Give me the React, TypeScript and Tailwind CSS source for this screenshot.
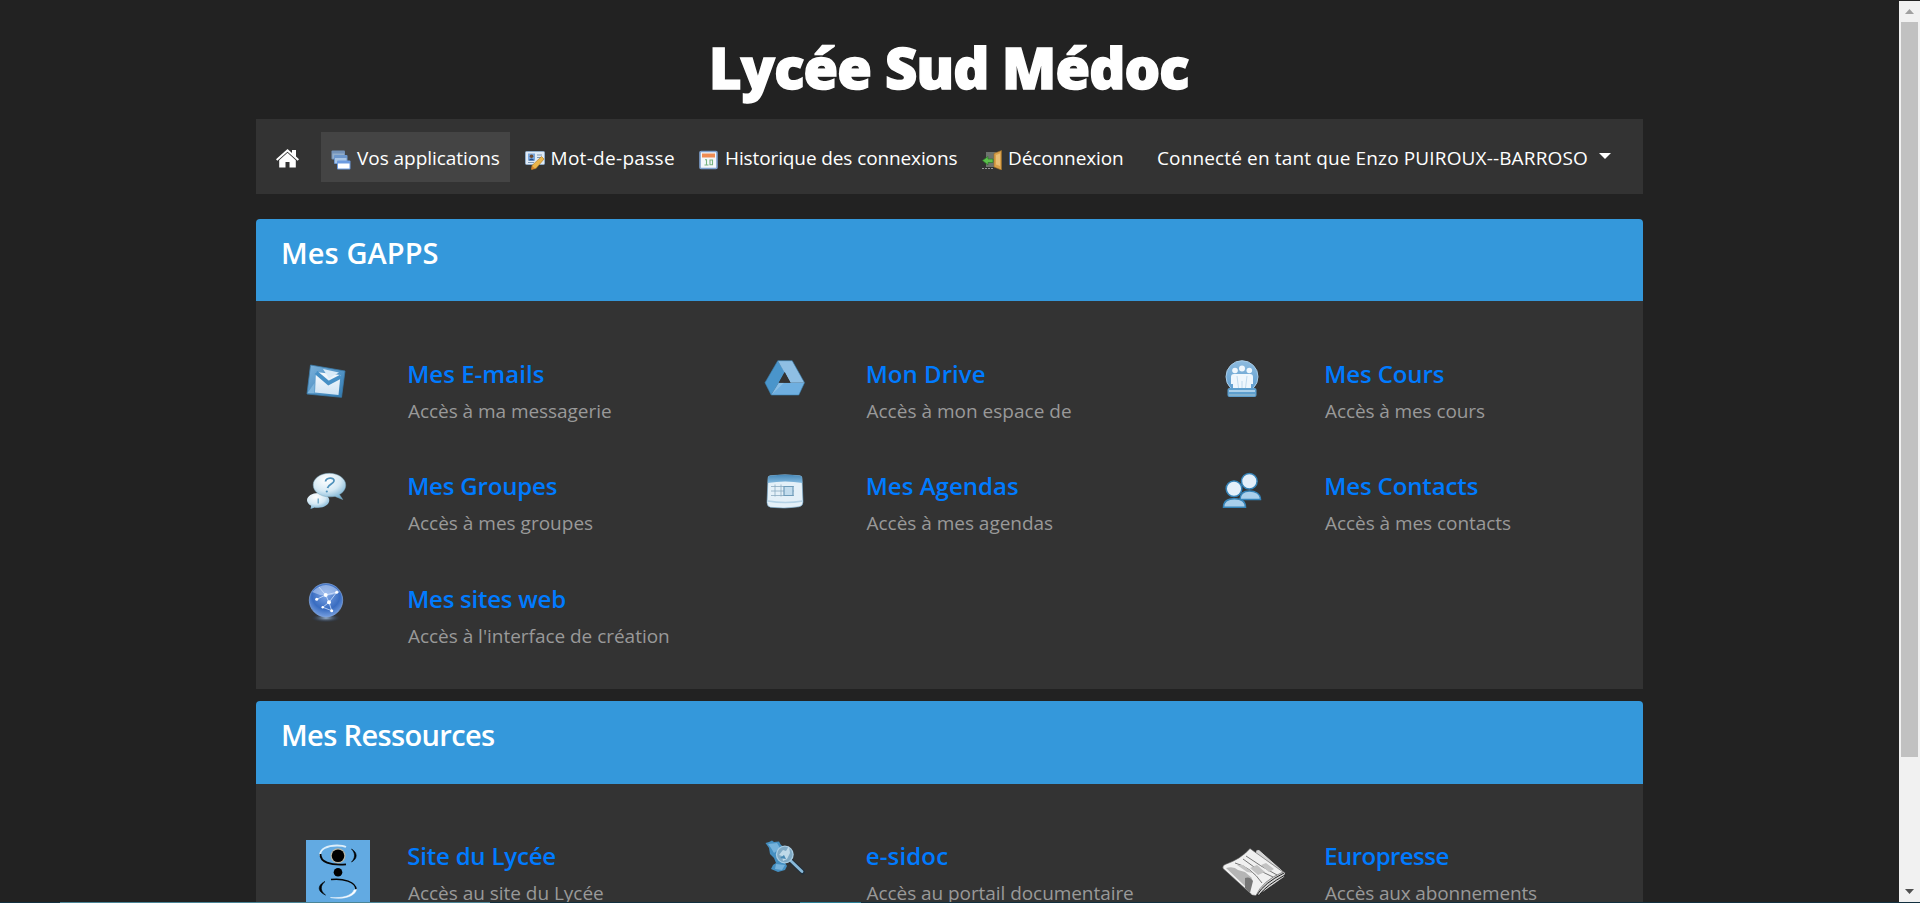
import type { ReactNode } from "react";

const svg = "block h-10 w-10 overflow-visible";

const MailIcon = () => (
  <svg viewBox="0 0 40 40" className={svg}>
    <defs>
      <linearGradient id="mailA" x1="0" y1="0" x2="1" y2="1"><stop offset="0" stopColor="#7db3dd" /><stop offset="1" stopColor="#2f79b0" /></linearGradient>
      <linearGradient id="mailB" x1="0" y1="0" x2="0" y2="1"><stop offset="0" stopColor="#f6fafd" /><stop offset="1" stopColor="#cfe3f3" /></linearGradient>
    </defs>
    <path d="M4.500 7 39 13 35.500 39.300 1 36Z" fill="url(#mailA)" stroke="#3a7aa8" strokeWidth=".8" strokeLinejoin="round" />
    <path d="M10 14 34.500 17 32.500 37 9 34.500Z" fill="url(#mailB)" />
    <path d="M1.500 35 8.500 25 8.500 35Z" fill="#8fc0e4" opacity=".7" />
    <path d="M17 11 33 14.500 23 20.500Z" fill="#d9ebf8" />
    <path d="M10 14.500 22.500 25 35 18.500" fill="none" stroke="#4690c6" strokeWidth="4" />
  </svg>
);

const DriveIcon = () => (
  <svg viewBox="0 0 40 40" className={svg}>
    <path d="M12.800 2.700 19.800 13.700 13.800 24.700 6.200 37 0 24.700Z" fill="#4a95cb" />
    <path d="M12.800 2.700H27.200L39.500 24.700H25.500Z" fill="#8fbfe4" />
    <path d="M13.800 24.700H39.500L33.800 37H6.200Z" fill="#6fafe0" />
    <path d="M13.800 24.700 6.200 37 19 24.700Z" fill="#9bc8ea" opacity=".6" />
    <path d="M12.800 2.700H27.200L39.500 24.700 33.800 37H6.200L0 24.700Z" fill="none" stroke="#3b83b6" strokeWidth=".6" />
    <path d="M19.800 14 25.500 24.700H13.800Z" fill="#333" />
  </svg>
);

const CoursesIcon = () => (
  <svg viewBox="0 0 40 40" className={svg}>
    <defs><linearGradient id="crsA" x1="0" y1="0" x2="0" y2="1"><stop offset="0" stopColor="#8dbbdf" /><stop offset="1" stopColor="#5b9bce" /></linearGradient></defs>
    <circle cx="19" cy="18.700" r="16" fill="url(#crsA)" stroke="#a9cde8" strokeWidth="1" />
    <g fill="#eff7fd">
      <circle cx="12" cy="12.500" r="2.800" /><circle cx="26.300" cy="12.500" r="2.800" /><circle cx="19" cy="10.500" r="3" />
      <path d="M8 19q0-3 3-3h16q3 0 3 3v7h-2v5H10v-5H8z" />
    </g>
    <path d="M14 18 15.500 30M24 18 22.500 30M19 23v8" stroke="#b5d3ea" strokeWidth=".8" />
    <rect x="4.500" y="30" width="29" height="9" rx="2" fill="#5e9fce" />
    <path d="M6 33h26" stroke="#c7e1f3" strokeWidth="1.500" />
    <path d="M6 37h26" stroke="#8fb7cf" strokeWidth="1.500" />
  </svg>
);

const GroupsIcon = () => (
  <svg viewBox="0 0 40 40" className={svg}>
    <defs><radialGradient id="grpA" cx=".4" cy=".25" r=".8"><stop offset="0" stopColor="#fff" /><stop offset=".55" stopColor="#d5e9f4" /><stop offset="1" stopColor="#6facd0" /></radialGradient></defs>
    <path d="M12.300 22c6 0 11 3.200 11 7.300s-5 7.500-11 7.500c-1.600 0-2.500-.2-3.600-.4L4.500 38l.7-3.200C2.700 33.500 1 31.500 1 29.300 1 25.200 6.200 22 12.300 22Z" fill="url(#grpA)" />
    <path d="M23.300 2.300c9 0 16.400 5.200 16.400 11.700 0 4-2.500 7.400-6.300 9.500l3.300 5-7.700-3.100c-12 2.200-21.800-3.600-21.800-11.400C7.200 7.500 14.300 2.300 23.300 2.300Z" fill="url(#grpA)" stroke="#7fa9bd" strokeWidth=".5" />
    <path d="M19.500 10.500c.5-4 9-4.600 8.500-.5-.3 3-5.500 3-6.500 7" fill="none" stroke="#4e91bb" strokeWidth="1.800" /><circle cx="20.800" cy="20.500" r="1.100" fill="#4e91bb" />
    <path d="M12.200 27.500v5" stroke="#5a9dc0" strokeWidth="1.200" />
  </svg>
);

const AgendaIcon = () => (
  <svg viewBox="0 0 40 40" className={svg}>
    <defs><linearGradient id="agdA" x1="0" y1="0" x2="0" y2="1"><stop offset="0" stopColor="#4788b8" /><stop offset="1" stopColor="#83b9de" /></linearGradient></defs>
    <path d="M3 7q0-2 2-2.300 15-1.800 30 0 2 .3 2 2.300l1 24q0 4-4 4.800-14 2.300-28.500.5Q2 35.500 2 31.500Z" fill="#e4f0f8" stroke="#75a9cc" strokeWidth=".6" />
    <path d="M3 7q0-2 2-2.300 15-1.800 30 0 2 .3 2 2.300l.3 5q-17-3-34.500 0Z" fill="url(#agdA)" />
    <path d="M6 15.500h23M6 20h23M6 24.500h23M10 13.500v12M16 13.500v12" stroke="#8cabc0" strokeWidth=".8" />
    <path d="M19 15.500h9v9h-9z" fill="#c2dced" stroke="#6f9cb9" strokeWidth="1.200" />
    <path d="M3 30q17 3 35 0" stroke="#b4d2e6" fill="none" strokeWidth="1.400" />
  </svg>
);

const ContactsIcon = () => (
  <svg viewBox="0 0 40 40" className={svg} stroke="#3583b8" strokeWidth="1.500">
    <path d="M17 28.500c0-6 4-8.500 9.500-8.500s11 2.500 11 8.500Z" fill="#a9cfeb" />
    <circle cx="26.300" cy="10.200" r="7.800" fill="#e3effa" />
    <path d="M.5 36.300c0-6 4.500-8.500 11-8.500s11 2.500 11 8.500Z" fill="#a9cfeb" />
    <circle cx="11" cy="17.800" r="7.800" fill="#e3effa" />
  </svg>
);

const WebIcon = () => (
  <svg viewBox="0 0 40 40" className={svg}>
    <defs>
      <radialGradient id="webA" cx=".5" cy=".35" r=".7"><stop offset="0" stopColor="#7ea6e6" /><stop offset=".6" stopColor="#396cc0" /><stop offset="1" stopColor="#82a9e6" /></radialGradient>
      <radialGradient id="webB"><stop offset="0" stopColor="#9cb5d2" /><stop offset="1" stopColor="#1c3355" stopOpacity="0" /></radialGradient>
    </defs>
    <ellipse cx="20" cy="35" rx="15" ry="4.500" fill="url(#webB)" />
    <circle cx="20" cy="17.200" r="16.700" fill="url(#webA)" stroke="#80a5df" strokeWidth=".7" />
    <path d="M6 9Q20-5 34 9 20 16 6 9" fill="#c2d7f8" opacity=".55" />
    <path d="M10.700 16.300 19.700 12l3.300 7.300L30.700 9.300M13 4l6.700 8 11-2.700M23 19.300l2.700 8.400M23 19.300 16.700 24.300M25.700 27.700 17 24.300" stroke="#cfe2ff" strokeWidth=".8" fill="none" />
    <g fill="#fff"><circle cx="19.700" cy="12" r="2" /><circle cx="30.700" cy="9.300" r="1.500" /><circle cx="10.700" cy="16.300" r="1.500" /><circle cx="23" cy="19.300" r="2" /><circle cx="25.700" cy="27.700" r="1.500" /><circle cx="16.700" cy="24.300" r="1.200" /></g>
  </svg>
);

const SchoolIcon = () => (
  <svg viewBox="0 0 64 64" className="block h-16 w-16">
    <rect width="64" height="64" fill="#62aae2" />
    <path d="M14 15.500C14 9 21 5.500 31 5.500q6 0 9 1.500" fill="none" stroke="#dceefa" strokeWidth="1.800" />
    <path d="M14.500 14C14 22 24 25.500 40 24.300" fill="none" stroke="#050505" strokeWidth="1.800" />
    <circle cx="32" cy="15.700" r="7.500" fill="#b9b7a7" /><circle cx="32" cy="15.700" r="6.300" fill="#000" />
    <path d="M45.500 9c6 3.500 6.500 9.500 0 13 4-4 4-9 0-13Z" fill="#000" stroke="#000" strokeWidth=".6" />
    <circle cx="32" cy="32.300" r="4.300" fill="#000" />
    <path d="M19 41.500c-8 4-7.500 10 .5 13.500-5.500-4-5.500-9.500-.5-13.500Z" fill="#000" stroke="#000" strokeWidth=".6" />
    <path d="M25 39.500c12-1.500 25 2.500 25 10" fill="none" stroke="#050505" strokeWidth="1.500" />
    <path d="M50.500 49.500C49 56.500 37 60 24.500 57.500 37 58.500 46 55.500 48 50Z" fill="#fff" stroke="#e5f2fb" strokeWidth=".6" />
  </svg>
);

const SearchIcon = () => (
  <svg viewBox="0 0 40 40" className={svg}>
    <path d="M.5 3 4 2 7 .5 9 2l5-.5L16 5l5 3-2 13 3 5-2 4-7 2-7-3 2-4 3-2-2-5L5 14 4 8Z" fill="#458fc1" />
    <path d="M3 4 12 3 15 8 9 13 6 8ZM11 24l9 1-3 5-7-1Z" fill="#75b2db" />
    <path d="m26.500 21.500 11 10.500" stroke="#1c2f3f" strokeWidth="5" opacity=".7" strokeLinecap="round" />
    <path d="m25.500 20.500 11.500 11" stroke="#88b9da" strokeWidth="2.800" strokeLinecap="round" />
    <circle cx="19.800" cy="14.500" r="8.300" fill="#7fa9c4" stroke="#a9cde4" strokeWidth="1.300" />
    <path d="M14 15l4-5 3 1 3-5 1 7-3 6-4 2-1-5Z" fill="#bfd9e8" /><path d="M15 18l4-3 2 4Z" fill="#4688b3" />
  </svg>
);

const NewspaperIcon = () => (
  <svg viewBox="0 0 64 64" className="block h-16 w-16 overflow-visible">
    <path d="M33 10 36 9.500 62.500 33 61.500 37 36 55 28 55 26 48Z" fill="#d4d4d4" stroke="#222" strokeWidth=".8" />
    <path d="M27 8.500 60 32Q39 41 33 55.500 29 56 27 53L0 28.500Q-1 26 2 24.500 18 19 27 8.500Z" fill="#f0f0f0" stroke="#555" strokeWidth=".6" />
    <path d="M3 28q8-2 12 2l7 2 7 6-5 10Z" fill="#b5b5b5" /><path d="M22 38q5-2 8 3l-3 12-5-5Z" fill="#777" />
    <path d="M23 16Q37 26 54 35M20 19Q34 31 50 37M12 23Q28 27 39 43" stroke="#555" strokeWidth=".8" fill="none" />
    <path d="m27 28 7-3 8 7-7 3ZM38 25l5-2 8 6-5 3ZM14 25l6 0 10 8-6-1Z" fill="#c3c3c3" />
    <path d="M61 33Q41 43 34 55M62 35Q44 45 37 54" stroke="#222" strokeWidth="1" fill="none" />
  </svg>
);

const HomeIcon = () => (
  <svg viewBox="0 0 23 19" className="block h-[19px] w-[23px] fill-white">
    <path d="M11.500 0 16 4V1h4v6.600l3 2.700-1.300 1.500L11.500 2.800 1.300 11.800 0 10.300Z" />
    <path d="M11.500 3.800 19.800 11.300V18.500H13.500V13H9.500V18.500H3.200V11.300Z" />
  </svg>
);

const small = "mt-1 block h-5 w-5 shrink-0";

const AppsIcon = () => (
  <svg viewBox="0 0 20 20" className={small}>
    <rect x=".5" y=".5" width="13.500" height="9" rx="1" fill="#7493b9" /><rect x="1.500" y="3.500" width="11.500" height="5" fill="#93aeca" />
    <rect x="3" y="5" width="13.500" height="9" rx="1" fill="#6d97cc" /><rect x="4" y="8" width="11.500" height="5" fill="#a9c5e5" />
    <rect x="6" y="10.500" width="13.500" height="9" rx="1" fill="#6c9be0" /><rect x="7" y="13.500" width="11.500" height="5" fill="#fff" />
  </svg>
);

const PasswordIcon = () => (
  <svg viewBox="0 0 20 20" className={small}>
    <rect x=".5" y="1.500" width="19" height="13" rx="1" fill="#dfeaf6" stroke="#8eabc8" />
    <rect x="3" y="3.500" width="7" height="7" fill="#78a6dc" /><circle cx="6.500" cy="6.200" r="1.800" fill="#6d4a30" /><path d="M3.500 10.500q3-4 6 0Z" fill="#234f8b" />
    <path d="M12 5h5M12 7.500h4M3 12.500h6" stroke="#7d98b5" />
    <path d="M16.500 6.500 19 9 11 18.500 6.500 19.500 7 15.500Z" fill="#eab54a" stroke="#a9741d" strokeWidth=".6" /><path d="m6.500 19.500.5-3.500 3 2.500Z" fill="#d7812c" />
  </svg>
);

const CalendarIcon = () => (
  <svg viewBox="0 0 20 20" className={small}>
    <rect x="1" y="1.500" width="17" height="17" rx="1" fill="#f4f7fb" stroke="#7ea1d0" strokeWidth="1.600" />
    <rect x="3" y="3.500" width="13" height="4" fill="#ef8c54" />
    <path d="M6 9.800h1.500v5M5.500 15h4M11 10h2.500v4.800h-2.500z" stroke="#76b380" strokeWidth="1.100" fill="none" />
  </svg>
);

const LogoutIcon = () => (
  <svg viewBox="0 0 20 20" className={small}>
    <path d="M4 2h13v15H4z" fill="#6d726d" /><path d="M0 18.500h12" stroke="#999" strokeDasharray="2 1" />
    <path d="M12 3.500 19.500.500V20L12 17Z" fill="#d9a04a" stroke="#9b6b23" strokeWidth=".6" /><path d="m14 5 4-1.500V16l-4-1.500Z" fill="#e9be74" />
    <path d="M.5 10.500 6 6.500v2.500h5v3.500H6V15Z" fill="#5cc04c" stroke="#2c7928" strokeWidth=".7" />
  </svg>
);

function NavItem({ className, icon, children }: { className: string; icon?: ReactNode; children: ReactNode }) {
  return (
    <a className={`flex h-[50px] shrink-0 items-center gap-1.5 pt-0.5 text-[19px] leading-[30px] whitespace-nowrap text-white ${className}`}>
      {icon}
      {children}
    </a>
  );
}

function AppCard({ icon, title, text, titleClass, textClass }: { icon: ReactNode; title: string; text: string; titleClass: string; textClass: string }) {
  return (
    <article className="flex h-[112.5px]">
      <div className="w-[101.2px] shrink-0">{icon}</div>
      <div className="pt-[0.6px] whitespace-nowrap">
        <h3 className={`mb-[7.4px] text-[24px] leading-[30px] font-semibold text-[#007bff] ${titleClass}`}>{title}</h3>
        <p className={`pl-[0.8px] text-[19px] leading-[30px] text-[#999] ${textClass}`}>{text}</p>
      </div>
    </article>
  );
}

export default function App() {
  return (
    <div className="flex h-[903px] flex-col overflow-hidden bg-[#222] font-['Open_Sans',sans-serif]">
      <div className="flex h-[902px] overflow-hidden">
        <div className="flex-1 pl-64">
          <div className="w-[1387px]">
            <header className="h-[119px] pt-[35px] pl-[453px]">
              <h1 className="text-[56px] leading-[64px] font-extrabold tracking-[-0.8px] whitespace-nowrap text-white [stroke-linejoin:round] [-webkit-text-stroke:1.5px_white]">Lycée Sud Médoc</h1>
            </header>

            <nav className="mb-[25px] flex h-[75px] bg-[#333] pt-[13px]">
              <NavItem className="w-[65px] pl-5"><HomeIcon /></NavItem>
              <NavItem className="w-[189px] bg-[#444] pl-[10px] tracking-[-0.04px]" icon={<AppsIcon />}>Vos applications</NavItem>
              <NavItem className="w-[180px] pl-[14.5px] tracking-[0.3px]" icon={<PasswordIcon />}>Mot-de-passe</NavItem>
              <NavItem className="w-[282px] pl-[9px] tracking-[-0.11px]" icon={<CalendarIcon />}>Historique des connexions</NavItem>
              <NavItem className="w-[175px] pl-[10px] tracking-[-0.11px]" icon={<LogoutIcon />}>Déconnexion</NavItem>
              <NavItem className="pl-[10px] tracking-[0.14px]">
                Connecté en tant que Enzo PUIROUX--BARROSO
                <svg viewBox="0 0 12 6" className="mb-1 ml-[5px] h-1.5 w-3 fill-white"><path d="M0 0h12L6 6Z" /></svg>
              </NavItem>
            </nav>

            <section className="mb-[12.5px]">
              <div className="h-[82px] rounded-t-[4px] bg-[#3498db] pt-4 pl-[25px]">
                <h2 className="text-[29px] leading-9 font-semibold tracking-[0.08px] text-white">Mes GAPPS</h2>
              </div>
              <div className="grid h-[387.5px] grid-cols-[458.5px_458.5px_420px] content-start bg-[#333] pt-[57px] pl-[50px]">
                <AppCard icon={<MailIcon />} title="Mes E-mails" text="Accès à ma messagerie" titleClass="tracking-[0.03px]" textClass="tracking-[-0.05px]" />
                <AppCard icon={<DriveIcon />} title="Mon Drive" text="Accès à mon espace de" titleClass="tracking-[0.04px]" textClass="tracking-[0.01px]" />
                <AppCard icon={<CoursesIcon />} title="Mes Cours" text="Accès à mes cours" titleClass="tracking-[-0.1px]" textClass="tracking-[-0.1px]" />
                <AppCard icon={<GroupsIcon />} title="Mes Groupes" text="Accès à mes groupes" titleClass="tracking-[-0.18px]" textClass="tracking-[0px]" />
                <AppCard icon={<AgendaIcon />} title="Mes Agendas" text="Accès à mes agendas" titleClass="tracking-[0.03px]" textClass="tracking-[-0.02px]" />
                <AppCard icon={<ContactsIcon />} title="Mes Contacts" text="Accès à mes contacts" titleClass="tracking-[-0.12px]" textClass="tracking-[-0.05px]" />
                <AppCard icon={<WebIcon />} title="Mes sites web" text="Accès à l'interface de création" titleClass="tracking-[-0.24px]" textClass="tracking-[-0.03px]" />
              </div>
            </section>

            <section>
              <div className="h-[83px] rounded-t-[4px] bg-[#3498db] pt-4 pl-[25px]">
                <h2 className="text-[29px] leading-9 font-semibold tracking-[-0.64px] text-white">Mes Ressources</h2>
              </div>
              <div className="grid h-[300px] grid-cols-[458.5px_458.5px_420px] content-start bg-[#333] pt-[56px] pl-[50px]">
                <AppCard icon={<SchoolIcon />} title="Site du Lycée" text="Accès au site du Lycée" titleClass="tracking-[-0.2px]" textClass="tracking-[-0.03px]" />
                <AppCard icon={<SearchIcon />} title="e-sidoc" text="Accès au portail documentaire" titleClass="tracking-[0.16px]" textClass="tracking-[-0.06px]" />
                <AppCard icon={<NewspaperIcon />} title="Europresse" text="Accès aux abonnements" titleClass="tracking-[-0.55px]" textClass="tracking-[-0.16px]" />
              </div>
            </section>
          </div>
        </div>

        <aside className="mt-px flex w-[21px] flex-col items-center bg-[#f1f1f1]">
          <div className="flex h-[21px] items-center"><svg viewBox="0 0 9 5" className="h-[5px] w-[9px] fill-[#a0a0a0]"><path d="M0 5h9L4.500 0Z" /></svg></div>
          <div className="h-[735px] w-[17px] bg-[#c1c1c1]" />
          <div className="mt-auto flex h-[21px] items-center"><svg viewBox="0 0 9 5" className="h-[5px] w-[9px] fill-[#505050]"><path d="M0 0h9L4.500 5Z" /></svg></div>
        </aside>
      </div>
      <div className="flex h-px bg-[#12303f]">
        <div className="ml-[60px] w-[430px] bg-[#4a8597]" />
        <div className="ml-[310px] w-[61px] bg-[#2a8098]" />
      </div>
    </div>
  );
}
